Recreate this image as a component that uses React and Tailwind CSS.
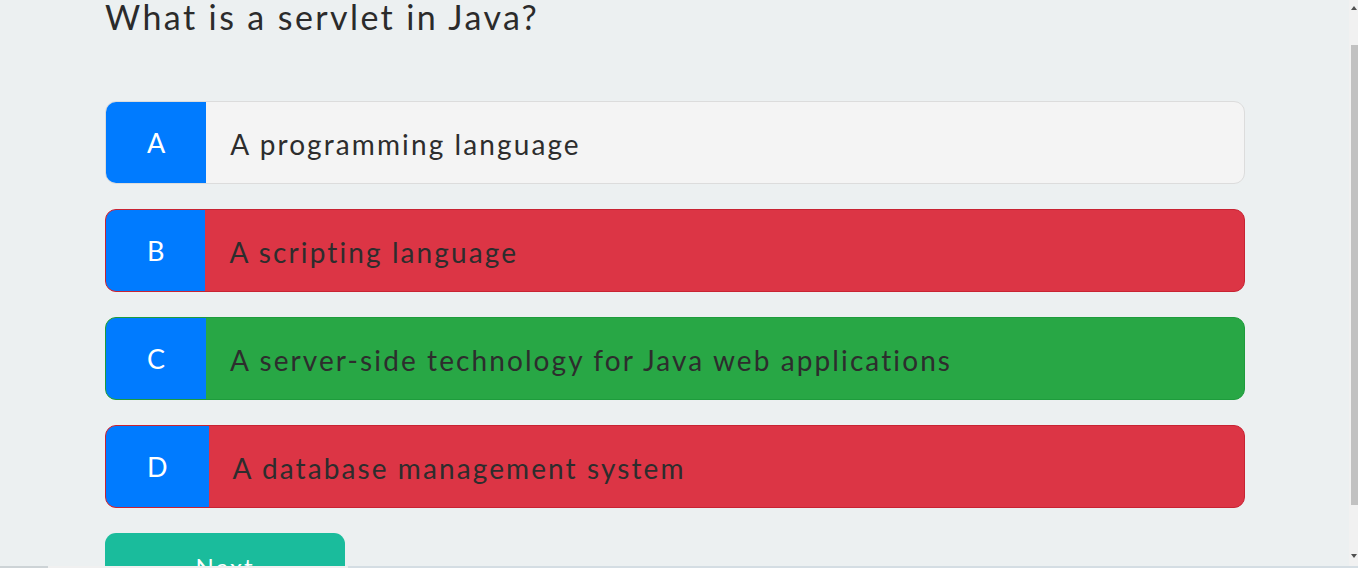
import React from 'react'

const options = [
    { key: 'A', text: 'A programming language', state: 'idle' },
    { key: 'B', text: 'A scripting language', state: 'wrong' },
    { key: 'C', text: 'A server-side technology for Java web applications', state: 'right' },
    { key: 'D', text: 'A database management system', state: 'wrong' },
]

const stateClass = {
    idle: 'bg-[#f4f4f4] border-[#dcdcdc]',
    wrong: 'bg-[#dc3545] border-[#c82333]',
    right: 'bg-[#28a745] border-[#1e9c3c]',
}

function Option({ item }) {
    return (
        <div className={`flex h-[83px] rounded-[11px] border overflow-hidden ${stateClass[item.state]}`}>
            <div className="flex items-center justify-center bg-[#007bff] pl-[41px] pr-[39px] pt-[2px] text-white text-[27px] tracking-[2px]">
                {item.key}
            </div>
            <div className="flex items-center pl-[24px] pt-[2px] text-[#2d2d2d] text-[28px] tracking-[2.1px]">
                {item.text}
            </div>
        </div>
    )
}

export default function App() {
    return (
        <div className="relative h-[568px] overflow-hidden bg-[#ecf0f1] flex" style={{ fontFamily: 'Lato, "Noto Sans", sans-serif' }}>
            <div className="flex-1 pl-[105px]">
                <div className="w-[1140px] flex flex-col">
                    <h1 className="mt-[-11px] h-[112px] text-[34px] leading-[56px] tracking-[2.4px] text-[#2b2b2b] font-normal">
                        What is a servlet in Java?
                    </h1>
                    <div className="flex flex-col gap-[25px]">
                        {options.map(o => <Option key={o.key} item={o} />)}
                    </div>
                    <button className="mt-[25px] w-[240px] h-[60px] rounded-[11px] bg-[#1abc9c] text-white text-[24px] tracking-[2px] pt-[8px]">
                        Next
                    </button>
                </div>
            </div>

            {/* scrollbar */}
            <div className="w-[9px] bg-[#f1f1f1] flex flex-col items-center">
                <div className="h-[45px] flex items-start justify-end w-full pt-[6px] pr-[1px]">
                    <svg width="6" height="4" viewBox="0 0 6 4"><path d="M0 4 L3 0 L6 4Z" fill="#505050" /></svg>
                </div>
                <div className="w-[7px] ml-[2px] h-[460px] bg-[#c1c1c1]" />
                <div className="flex-1 flex items-end justify-end w-full pb-[10px] pr-[1px]">
                    <svg width="6" height="4" viewBox="0 0 6 4"><path d="M0 0 L3 4 L6 0Z" fill="#505050" /></svg>
                </div>
            </div>

            <div className="absolute left-0 right-0 bottom-0 h-[2px] bg-[#d4dde3] flex">
                <div className="w-[48px] bg-[#cdd3d6]" />
                <div className="w-[300px] bg-[#f0f0f0]" />
                <div className="flex-1" />
            </div>
        </div>
    )
}
